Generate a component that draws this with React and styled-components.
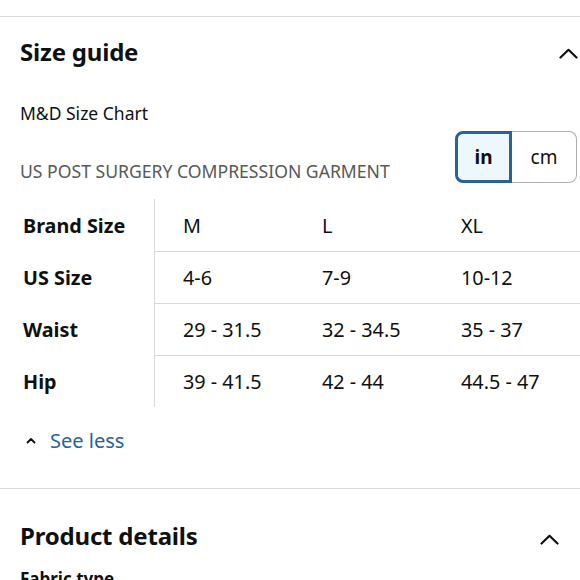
import React from "react";
import styled, { createGlobalStyle } from "styled-components";

const Global = createGlobalStyle`
  html, body { margin: 0; padding: 0; background: #fff; }
  body { font-family: "Noto Sans", "Open Sans", sans-serif; color: #0f1111; overflow: hidden; }
  #root { width: 580px; height: 580px; overflow: hidden; }
`;

const Page = styled.div`
  padding-top: 16px;
`;

const Section = styled.section`
  border-top: 1px solid #d5d9d9;
  padding: 0 0 0 20px;
`;

const Header = styled.div`
  display: flex;
  align-items: center;
  justify-content: space-between;
  height: ${(p) => p.$h}px;
  margin-top: ${(p) => p.$mt || 0}px;
  padding-right: ${(p) => p.$pr}px;
`;

const Title = styled.h2`
  margin: 0;
  font-size: 24px;
  line-height: 32px;
  font-weight: 700;
  letter-spacing: -0.2px;
`;

const ChevronBox = styled.span`
  display: flex;
  margin-top: ${(p) => p.$dy}px;
`;

const Chevron = ({ dy = 0 }) => (
  <ChevronBox $dy={dy}>
    <svg width="19" height="11" viewBox="0 0 19 11" fill="none">
      <path d="M1.5 9.5 L9.5 1.8 L17.5 9.5" stroke="#0f1111" strokeWidth="2.2" strokeLinecap="round" strokeLinejoin="round" />
    </svg>
  </ChevronBox>
);

const ChartName = styled.div`
  font-size: 17.5px;
  line-height: 24px;
`;

const UnitRow = styled.div`
  display: flex;
  align-items: flex-end;
  justify-content: space-between;
  margin-top: 6px;
  padding-right: 3px;
`;

const Subtitle = styled.div`
  font-size: 17.6px;
  color: #565959;
  line-height: 22px;
  margin-bottom: 1px;
`;

const Toggle = styled.div`
  display: flex;
  height: 52px;
`;

const UnitButton = styled.div`
  display: flex;
  align-items: center;
  justify-content: center;
  box-sizing: border-box;
  width: ${(p) => p.$w}px;
  font-size: 19px;
  font-weight: ${(p) => (p.$active ? 700 : 400)};
  background: ${(p) => (p.$active ? "#edf8fd" : "#fff")};
  border: ${(p) => (p.$active ? "3px solid #2a6196" : "1px solid #a9aeae")};
  border-left-width: ${(p) => (p.$active ? "3px" : "0")};
  border-radius: ${(p) => (p.$active ? "8px 0 0 8px" : "0 8px 8px 0")};
`;

const Table = styled.div`
  display: grid;
  grid-template-columns: 135px 139px 139px 167px;
  margin-top: 16px;
  margin-left: -20px;
  padding-left: 20px;
`;

const LabelCell = styled.div`
  height: 52px;
  display: flex;
  align-items: center;
  padding-left: 3px;
  font-size: 19.8px;
  font-weight: 700;
  border-right: 1px solid #d5d9d9;
`;

const Cell = styled.div`
  height: 52px;
  box-sizing: border-box;
  display: flex;
  align-items: center;
  padding-left: 28px;
  font-size: 19.8px;
  border-top: ${(p) => (p.$first ? "none" : "1px solid #d5d9d9")};
`;

const SeeLess = styled.div`
  display: flex;
  align-items: center;
  gap: 14px;
  margin-top: 21px;
  padding-left: 6px;
  height: 24px;
  color: #2162a1;
  font-size: 20px;
`;

const SmallChevron = () => (
  <svg width="10" height="7" viewBox="0 0 10 7" fill="none">
    <path d="M1.5 5.5 L5 2 L8.5 5.5" stroke="#0f1111" strokeWidth="1.8" strokeLinecap="round" strokeLinejoin="round" />
  </svg>
);

const Spacer = styled.div`
  height: ${(p) => p.$h}px;
`;

const FieldLabel = styled.div`
  font-size: 17px;
  line-height: 22px;
  font-weight: 700;
`;

const rows = [
  ["Brand Size", "M", "L", "XL"],
  ["US Size", "4-6", "7-9", "10-12"],
  ["Waist", "29 - 31.5", "32 - 34.5", "35 - 37"],
  ["Hip", "39 - 41.5", "42 - 44", "44.5 - 47"],
];

export default function App() {
  return (
    <Page>
      <Global />
      <Section>
        <Header $h={70} $pr={2}>
          <Title>Size guide</Title>
          <Chevron dy={2} />
        </Header>
        <Spacer $h={14} />
        <ChartName>M&amp;D Size Chart</ChartName>
        <UnitRow>
          <Subtitle>US POST SURGERY COMPRESSION GARMENT</Subtitle>
          <Toggle>
            <UnitButton $active $w={57}>in</UnitButton>
            <UnitButton $w={65}>cm</UnitButton>
          </Toggle>
        </UnitRow>
        <Table>
          {rows.map((r, i) => (
            <React.Fragment key={r[0]}>
              <LabelCell>{r[0]}</LabelCell>
              {r.slice(1).map((v, j) => (
                <Cell key={j} $first={i === 0}>{v}</Cell>
              ))}
            </React.Fragment>
          ))}
        </Table>
        <SeeLess>
          <SmallChevron />
          <span>See less</span>
        </SeeLess>
        <Spacer $h={36} />
      </Section>
      <Section>
        <Header $h={64} $mt={15} $pr={21}>
          <Title>Product details</Title>
          <Chevron dy={6} />
        </Header>
        <FieldLabel>Fabric type</FieldLabel>
      </Section>
    </Page>
  );
}
